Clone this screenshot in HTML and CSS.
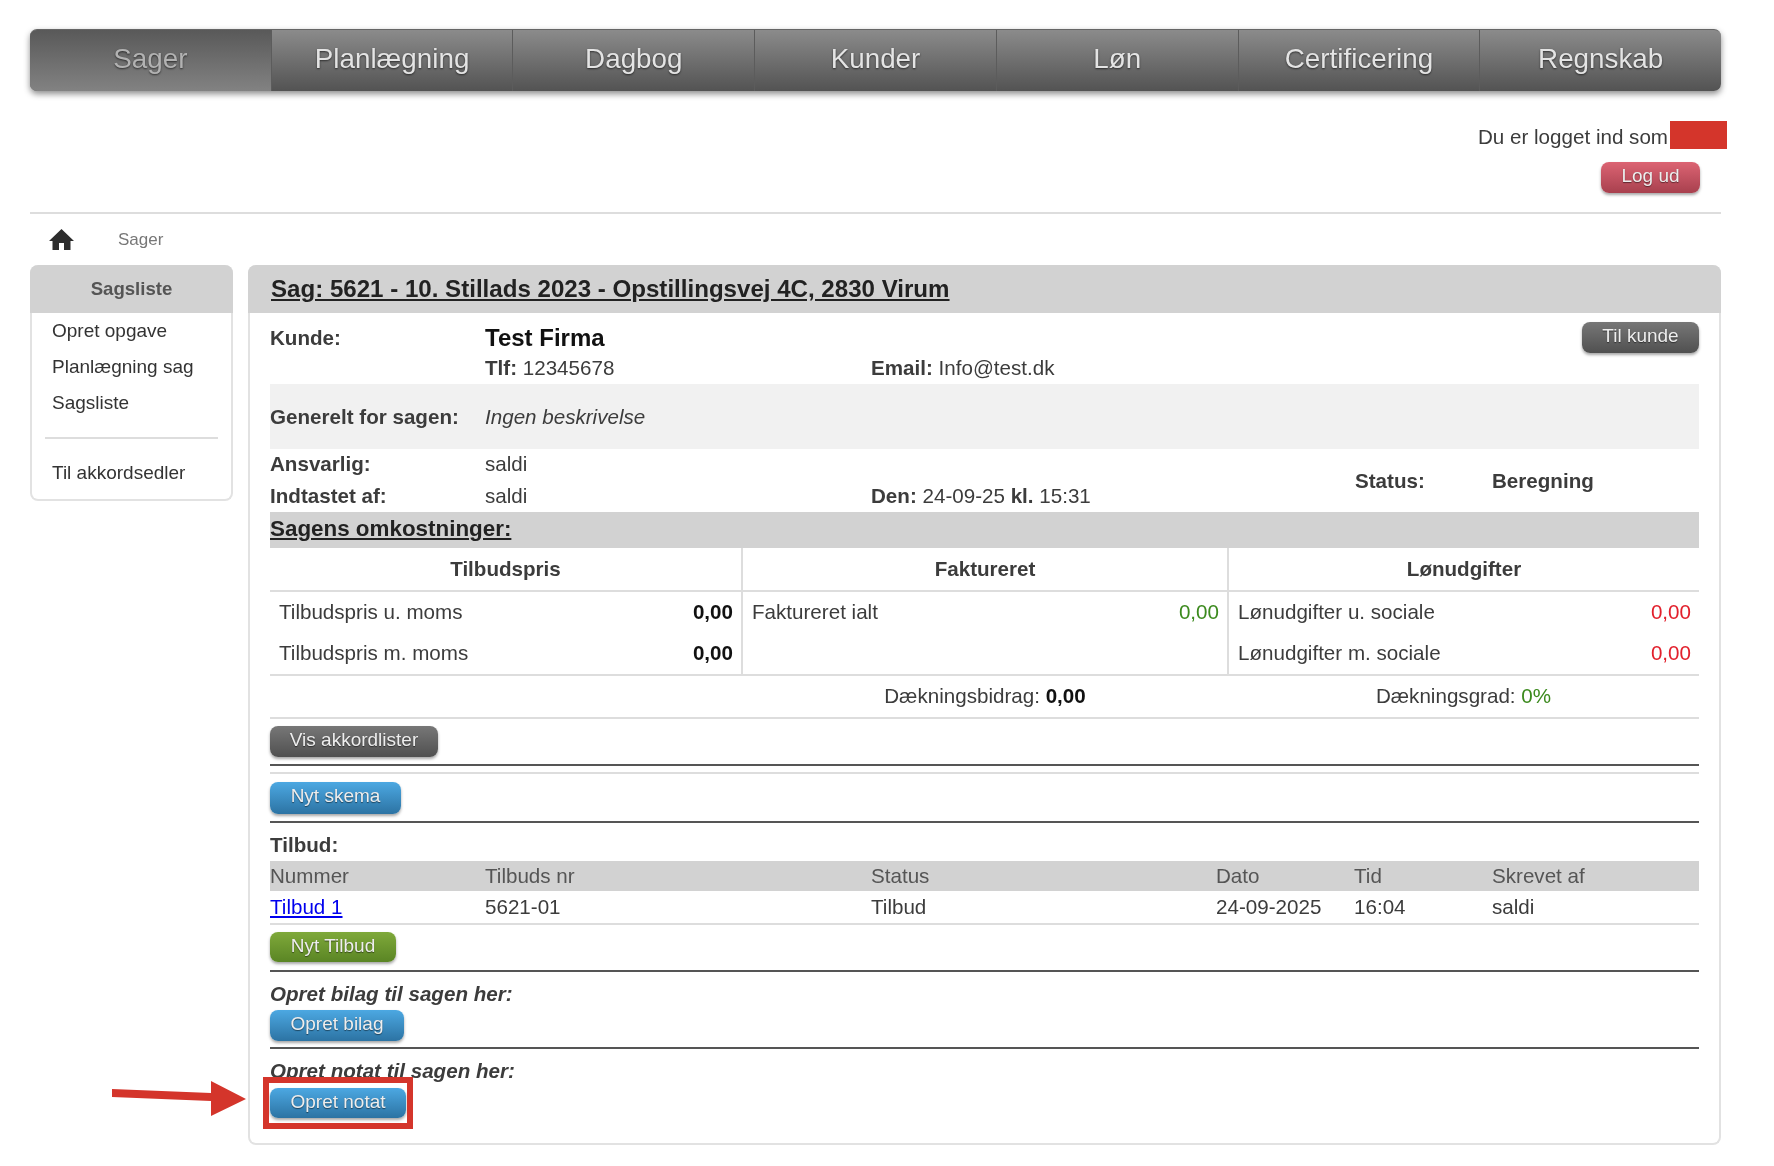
FILE: index.html
```html
<!DOCTYPE html>
<html lang="da">
<head>
    <meta charset="UTF-8">
    <title>Sag 5621</title>
    <link rel="stylesheet" href="styles.css">
</head>
<body>
    <div class="page">
        <nav class="topnav">
            <a class="active">Sager</a>
            <a>Planlægning</a>
            <a>Dagbog</a>
            <a>Kunder</a>
            <a>Løn</a>
            <a>Certificering</a>
            <a>Regnskab</a>
        </nav>

        <div class="userbar">
            <div class="userline">Du er logget ind som</div>
            <a class="btn btn-red">Log ud</a>
        </div>

        <div class="crumbs">
            <svg class="home-icon" viewBox="0 0 25 21"><path d="M12.5 0 L25 12 H21.5 V21 H15 V14 H10 V21 H3.5 V12 H0 Z"/></svg>
            <span>Sager</span>
        </div>

        <div class="columns">
            <aside class="sidebar">
                <div class="side-head">Sagsliste</div>
                <ul class="side-list">
                    <li>Opret opgave</li>
                    <li>Planlægning sag</li>
                    <li>Sagsliste</li>
                </ul>
                <div class="side-rule"></div>
                <ul class="side-list">
                    <li>Til akkordsedler</li>
                </ul>
            </aside>

            <main class="panel">
                <div class="panel-head"><span>Sag: 5621 - 10. Stillads 2023 - Opstillingsvej 4C, 2830 Virum</span></div>
                <div class="panel-body">
                    <div class="info info-top">
                        <b class="label">Kunde:</b>
                        <b class="firm">Test Firma</b>
                        <a class="btn btn-dark btn-kunde">Til kunde</a>
                        <span></span>
                        <span><b>Tlf:</b> 12345678</span>
                        <span><b>Email:</b> Info@test.dk</span>
                    </div>

                    <div class="general">
                        <b>Generelt for sagen:</b>
                        <i>Ingen beskrivelse</i>
                    </div>

                    <div class="info info-lower">
                        <b>Ansvarlig:</b>
                        <span>saldi</span>
                        <span></span>
                        <b class="status-label">Status:</b>
                        <b class="status-value">Beregning</b>
                        <b>Indtastet af:</b>
                        <span>saldi</span>
                        <span><b>Den:</b> 24-09-25 <b>kl.</b> 15:31</span>
                    </div>

                    <div class="cost-head"><span>Sagens omkostninger:</span></div>

                    <table class="cost">
                        <tr class="cost-titles">
                            <th>Tilbudspris</th>
                            <th>Faktureret</th>
                            <th>Lønudgifter</th>
                        </tr>
                        <tr class="cost-first">
                            <td><div class="pair"><span>Tilbudspris u. moms</span><b class="black">0,00</b></div></td>
                            <td><div class="pair"><span>Faktureret ialt</span><span class="green">0,00</span></div></td>
                            <td><div class="pair"><span>Lønudgifter u. sociale</span><span class="red">0,00</span></div></td>
                        </tr>
                        <tr class="cost-second">
                            <td><div class="pair"><span>Tilbudspris m. moms</span><b class="black">0,00</b></div></td>
                            <td></td>
                            <td><div class="pair"><span>Lønudgifter m. sociale</span><span class="red">0,00</span></div></td>
                        </tr>
                        <tr class="cost-sum">
                            <td></td>
                            <td>Dækningsbidrag: <span class="black strong">0,00</span></td>
                            <td>Dækningsgrad: <span class="green">0%</span></td>
                        </tr>
                    </table>

                    <div class="btn-row row-akkord"><a class="btn btn-dark w-akkord">Vis akkordlister</a></div>
                    <div class="rule-dark"></div>
                    <div class="rule-light gap-light"></div>
                    <div class="btn-row row-skema"><a class="btn btn-blue w-skema">Nyt skema</a></div>
                    <div class="rule-dark"></div>

                    <div class="sec-title"><b>Tilbud:</b></div>
                    <table class="offers">
                        <tr class="offers-head">
                            <td class="c1">Nummer</td>
                            <td class="c2">Tilbuds nr</td>
                            <td class="c3">Status</td>
                            <td class="c4">Dato</td>
                            <td class="c5">Tid</td>
                            <td>Skrevet af</td>
                        </tr>
                        <tr class="offers-row">
                            <td><a class="link">Tilbud 1</a></td>
                            <td>5621-01</td>
                            <td>Tilbud</td>
                            <td>24-09-2025</td>
                            <td>16:04</td>
                            <td>saldi</td>
                        </tr>
                    </table>
                    <div class="btn-row row-tilbud"><a class="btn btn-green w-tilbud">Nyt Tilbud</a></div>
                    <div class="rule-dark"></div>

                    <div class="note-title">Opret bilag til sagen her:</div>
                    <a class="btn btn-blue w-bilag">Opret bilag</a>
                    <div class="rule-dark rule-after"></div>

                    <div class="note-title">Opret notat til sagen her:</div>
                    <a class="btn btn-blue w-notat">Opret notat</a>
                </div>
            </main>
        </div>
    </div>

    <div class="redacted"></div>
    <div class="mark-box"></div>
    <svg class="mark-arrow" viewBox="0 0 134 36"><polygon fill="#d4352b" points="0,8 99,12 99,0 134,18 99,35 99,20 0,16"/></svg>
</body>
</html>
```

FILE: styles.css
```css
body {
    margin: 0;
    background: #fff;
    font-family: "Liberation Sans", Arial, sans-serif;
    font-size: 20.6px;
    color: #3c3c3c;
    filter: blur(0.4px);
}
b {
    font-weight: bold;
}
.page {
    width: 1691px;
    margin-left: 30px;
    padding-top: 29px;
    padding-bottom: 21px;
}

/* top menu */
.topnav {
    display: flex;
    height: 62px;
    border-radius: 7px;
    overflow: hidden;
    box-shadow: 0 3px 6px rgba(0,0,0,0.45);
    background: linear-gradient(#8b8b8b, #535353);
    border-top: 1px solid #666;
    box-sizing: border-box;
}
.topnav a {
    flex: 1;
    text-align: center;
    line-height: 58px;
    font-size: 27.8px;
    color: #e4e4e4;
    text-shadow: 0 1px 2px rgba(0,0,0,0.6);
    border-left: 1px solid #5c5c5c;
}
.topnav a.active {
    color: #b2b2b2;
    border-left: none;
    background: linear-gradient(#595959, #828282);
}

/* user line */
.userbar {
    height: 123px;
    box-sizing: border-box;
    border-bottom: 2px solid #ddd;
    display: flex;
    flex-direction: column;
    align-items: flex-end;
    padding-top: 33px;
}
.userline {
    margin-right: 53px;
    line-height: 26px;
}
.userbar .btn {
    margin-top: 12px;
    margin-right: 21px;
    width: 99px;
}

/* buttons */
.btn {
    display: block;
    box-sizing: border-box;
    height: 31px;
    line-height: 27px;
    border-radius: 8px;
    font-size: 19px;
    text-align: center;
    color: #eee;
    text-shadow: 0 1px 1px rgba(0,0,0,0.5);
    box-shadow: 0 2px 3px rgba(0,0,0,0.35);
}
.btn-red {
    background: linear-gradient(#dc6473, #a8404e);
}
.btn-dark {
    background: linear-gradient(#777, #505050);
}
.btn-blue {
    background: linear-gradient(#4ca8e2, #2c73a3);
}
.btn-green {
    background: linear-gradient(#7fa93a, #5a8524);
}
.w-akkord { width: 168px; }
.w-skema { width: 131px; height: 32px; line-height: 28px; }
.w-tilbud { width: 126px; height: 30px; }
.w-bilag { width: 134px; }
.w-notat { width: 136px; height: 30px; margin-top: 3px; }

/* breadcrumb */
.crumbs {
    height: 51px;
    display: flex;
    align-items: center;
    font-size: 17px;
    color: #777;
    padding-left: 19px;
}
.home-icon {
    width: 25px;
    height: 21px;
    fill: #2d2d2d;
    margin-right: 44px;
    margin-top: -1px;
}

.columns {
    display: flex;
    gap: 15px;
    align-items: flex-start;
}

/* left menu */
.sidebar {
    width: 203px;
    height: 236px;
    box-sizing: border-box;
    border: 2px solid #e2e2e2;
    border-top: none;
    border-radius: 8px;
    font-size: 19px;
}
.side-head {
    height: 48px;
    line-height: 48px;
    margin: 0 -2px;
    background: #d2d2d2;
    border-radius: 8px 8px 0 0;
    font-size: 18.6px;
    font-weight: bold;
    text-align: center;
    color: #555;
}
.side-list {
    list-style: none;
    margin: 0;
    padding: 0 0 0 20px;
}
.side-list li {
    height: 36px;
    line-height: 36px;
    color: #333;
}
.side-rule {
    height: 2px;
    background: #ddd;
    margin: 16px 13px 16px 13px;
}

/* main panel */
.panel {
    width: 1473px;
    height: 880px;
    box-sizing: border-box;
    border: 2px solid #e2e2e2;
    border-top: none;
    border-radius: 8px;
}
.panel-head {
    height: 48px;
    line-height: 48px;
    margin: 0 -2px;
    padding-left: 23px;
    background: #d2d2d2;
    border-radius: 8px 8px 0 0;
    font-size: 24.1px;
    font-weight: bold;
    color: #222;
}
.panel-head span,
.cost-head span {
    text-decoration: underline;
}
.panel-body {
    padding: 0 20px 0 20px;
}

.info {
    display: grid;
    grid-template-columns: 215px 386px 484px 137px 1fr;
    line-height: 32px;
}
.info-top {
    grid-template-columns: 215px 386px 1fr;
    grid-template-rows: 30px 32px;
    padding-top: 9px;
}
.firm {
    font-size: 24px;
    color: #111;
    line-height: 32px;
}
.btn-kunde {
    width: 117px;
    justify-self: end;
}
.general {
    display: flex;
    align-items: center;
    height: 65px;
    background: #f1f1f1;
}
.general b {
    width: 215px;
}
.info-lower {
    grid-template-rows: 32px 31px;
    line-height: 30px;
}
.status-label {
    grid-column: 4;
    grid-row: 1 / 3;
    align-self: center;
}
.status-value {
    grid-column: 5;
    grid-row: 1 / 3;
    align-self: center;
}
.cost-head {
    height: 36px;
    line-height: 34px;
    background: #d2d2d2;
    font-size: 22.4px;
    font-weight: bold;
    color: #222;
}

/* cost table */
.cost {
    width: 100%;
    table-layout: fixed;
    border-collapse: collapse;
}
.cost th {
    height: 42px;
    padding: 0;
    font-size: 20.6px;
    border-bottom: 2px solid #ddd;
}
.cost th:nth-child(1) { width: 471px; }
.cost th:nth-child(2) { width: 484px; }
.cost th + th,
.cost-first td + td,
.cost-second td + td {
    border-left: 2px solid #ddd;
}
.cost-first td,
.cost-second td {
    height: 39px;
    padding: 0 8px 2px 9px;
}
.cost-second td {
    border-bottom: 2px solid #ddd;
}
.cost-sum td {
    height: 39px;
    padding: 0 0 2px;
    text-align: center;
    border-bottom: 2px solid #ddd;
}
.pair {
    display: flex;
    justify-content: space-between;
}
.black { color: #111; }
.strong { font-weight: bold; }
.green { color: #3c8a1e; }
.red { color: #e2202c; }

/* sections */
.btn-row {
    padding: 8px 0;
}
.row-akkord {
    padding: 7px 0;
}
.row-skema,
.row-tilbud {
    padding-bottom: 7px;
}
.row-tilbud {
    padding-top: 7px;
    padding-bottom: 8px;
}
.rule-dark {
    height: 2px;
    background: #555;
}
.rule-light {
    height: 2px;
    background: #ddd;
}
.gap-light {
    margin-top: 6px;
}
.sec-title {
    height: 38px;
    line-height: 44px;
}
.offers {
    width: 100%;
    table-layout: fixed;
    border-collapse: collapse;
}
.offers td {
    padding: 0;
}
.c1 { width: 215px; }
.c2 { width: 386px; }
.c3 { width: 345px; }
.c4 { width: 138px; }
.c5 { width: 138px; }
.offers-head td {
    height: 30px;
    background: #d2d2d2;
    color: #555;
}
.offers-row td {
    height: 32px;
    border-bottom: 2px solid #ddd;
}
.link {
    color: #0000ee;
    text-decoration: underline;
}
.note-title {
    height: 36px;
    padding-top: 8px;
    box-sizing: border-box;
    margin-bottom: 2px;
    line-height: 28px;
    font-weight: bold;
    font-style: italic;
}
.rule-after {
    margin-top: 6px;
}

/* annotations on top of the screenshot */
.redacted {
    position: absolute;
    left: 1670px;
    top: 121px;
    width: 57px;
    height: 28px;
    background: #d4352b;
}
.mark-box {
    position: absolute;
    left: 263px;
    top: 1077px;
    width: 150px;
    height: 52px;
    box-sizing: border-box;
    border: 6px solid #d4352b;
}
.mark-arrow {
    position: absolute;
    left: 112px;
    top: 1081px;
    width: 134px;
    height: 36px;
}
```
